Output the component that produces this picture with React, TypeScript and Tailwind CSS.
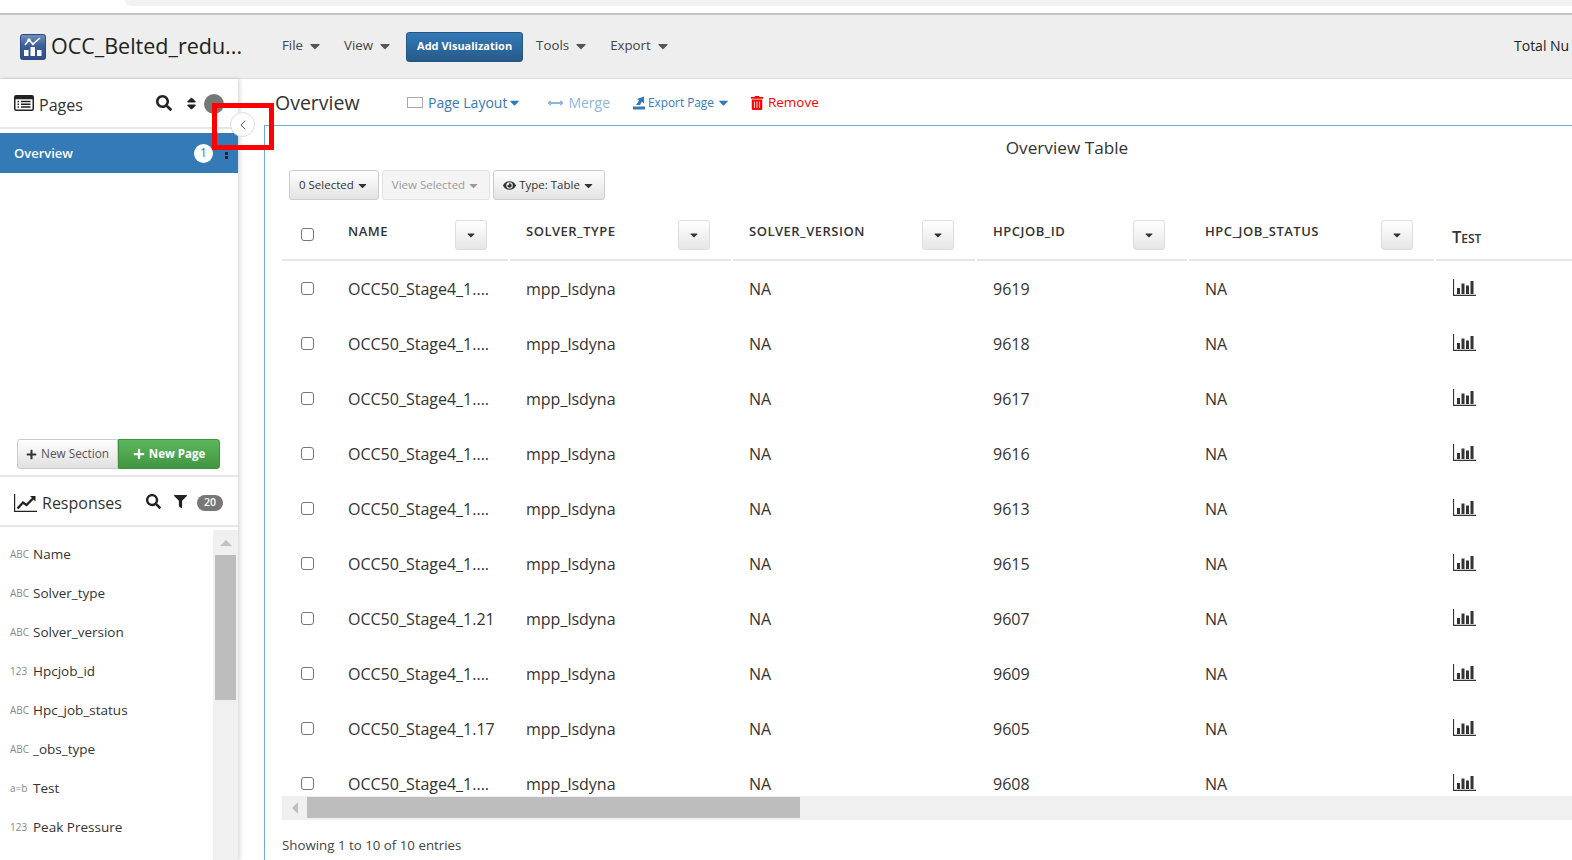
import { ChevronLeft } from "lucide-react";
import {
  FaCaretDown,
  FaEye,
  FaFilter,
  FaLongArrowAltRight,
  FaPlus,
  FaSearch,
  FaSort,
  FaTrashAlt,
} from "react-icons/fa";

const FONT = "font-['Open_Sans','Noto_Sans',sans-serif]";

const rows = [
  ["OCC50_Stage4_1....", "9619"],
  ["OCC50_Stage4_1....", "9618"],
  ["OCC50_Stage4_1....", "9617"],
  ["OCC50_Stage4_1....", "9616"],
  ["OCC50_Stage4_1....", "9613"],
  ["OCC50_Stage4_1....", "9615"],
  ["OCC50_Stage4_1.21", "9607"],
  ["OCC50_Stage4_1....", "9609"],
  ["OCC50_Stage4_1.17", "9605"],
  ["OCC50_Stage4_1....", "9608"],
];

const responses = [
  ["ABC", "Name"],
  ["ABC", "Solver_type"],
  ["ABC", "Solver_version"],
  ["123", "Hpcjob_id"],
  ["ABC", "Hpc_job_status"],
  ["ABC", "_obs_type"],
  ["a=b", "Test"],
  ["123", "Peak Pressure"],
];

function Logo() {
  return (
    <svg width="26" height="26" viewBox="0 0 26 26" className="shrink-0">
      <defs>
        <linearGradient id="logoBg" x1="0" y1="0" x2="0" y2="1">
          <stop offset="0" stopColor="#6f8fc0" />
          <stop offset="0.45" stopColor="#3c5f98" />
          <stop offset="1" stopColor="#2f4f85" />
        </linearGradient>
      </defs>
      <rect x="0.5" y="0.5" width="25" height="25" rx="2" fill="url(#logoBg)" stroke="#2c4a7c" />
      <path d="M5 11 L9 6 L13 10 L20 4" fill="none" stroke="#fff" strokeWidth="1.6" />
      <circle cx="9" cy="6" r="1.7" fill="#fff" />
      <circle cx="13" cy="10" r="1.3" fill="#fff" />
      <rect x="4" y="16" width="4.5" height="6" fill="#fff" />
      <rect x="10.5" y="13" width="4.5" height="9" fill="#fff" />
      <rect x="17" y="16" width="4.5" height="6" fill="#fff" />
    </svg>
  );
}

function ListIcon() {
  return (
    <svg width="20" height="16" viewBox="0 0 20 16" className="shrink-0">
      <rect x="0.75" y="0.75" width="18.5" height="14.5" rx="1.5" fill="#fff" stroke="#222" strokeWidth="1.5" />
      <rect x="0.75" y="0.75" width="18.5" height="3.5" fill="#222" />
      <path d="M3.5 6.5 H5 M7 6.5 H16.5 M3.5 9.25 H5 M7 9.25 H16.5 M3.5 12 H5 M7 12 H16.5" stroke="#222" strokeWidth="1.3" />
    </svg>
  );
}

function ResponsesIcon() {
  return (
    <svg width="23" height="18" viewBox="0 0 23 18" className="shrink-0">
      <path d="M0.6 0 V17.4 H23" fill="none" stroke="#222" strokeWidth="1.2" />
      <path d="M3.5 14.5 L9 8.5 L12.5 11 L20 3.5" fill="none" stroke="#222" strokeWidth="2.4" />
      <path d="M16 2 H21.5 V7.5 Z" fill="#222" />
    </svg>
  );
}

function BarsIcon() {
  return (
    <svg width="23" height="17" viewBox="0 0 23 17">
      <path d="M0.5 0 V16.4 H23" fill="none" stroke="#333" strokeWidth="1.2" />
      <rect x="4" y="9" width="3" height="6" fill="#333" />
      <rect x="8.5" y="4.5" width="3" height="10.5" fill="#333" />
      <rect x="13" y="6.5" width="3" height="8.5" fill="#333" />
      <rect x="17.5" y="2" width="3" height="13" fill="#333" />
    </svg>
  );
}

function ExportIcon() {
  return (
    <svg width="12" height="14" viewBox="0 0 12 14" className="shrink-0">
      <path d="M3 9 L6 4.5 L4 3 L11 0.5 L11 7.5 L8.8 5.8 L7 9 Z" fill="#337ab7" />
      <rect x="0" y="10.5" width="12" height="3" fill="#337ab7" />
    </svg>
  );
}

function Check() {
  return <span className="block w-[13px] h-[13px] rounded-[3px] border border-[#767676] bg-white" />;
}

function NavMenu({ label }: { label: string }) {
  return (
    <div className="flex items-center gap-[4px] text-[13.3px] text-[#444] -mt-[2px]">
      {label}
      <FaCaretDown className="text-[16px] text-[#555]" />
    </div>
  );
}

function ToolButton({ children, dim }: { children: React.ReactNode; dim?: boolean }) {
  return (
    <div
      className={`h-[30px] px-[9px] flex items-center gap-[2px] rounded-[3px] border text-[11.5px] ${
        dim
          ? "border-[#e2e2e2] bg-[#f4f4f4] text-[#9b9b9b]"
          : "border-[#ccc] bg-gradient-to-b from-white to-[#e3e3e3] text-[#333]"
      }`}
    >
      {children}
    </div>
  );
}

function HeadCell({ label, width, pad }: { label: string; width: string; pad: string }) {
  return (
    <div className={`${width} shrink-0 h-[53px] mr-[2px] border-b-2 border-[#e6e6e6] flex items-start justify-between ${pad}`}>
      <span className="mt-[14px] text-[13px] font-semibold tracking-[0.5px] text-[#333]">{label}</span>
      <span className="mt-[12px] w-[32px] h-[30px] rounded-[3px] border border-[#ddd] bg-gradient-to-b from-white to-[#e6e6e6] flex items-center justify-center">
        <FaCaretDown className="text-[12px] text-[#333]" />
      </span>
    </div>
  );
}

export default function App() {
  return (
    <div className={`${FONT} w-[1572px] h-[860px] overflow-hidden bg-white relative flex flex-col text-[#333]`}>
      {/* browser strip */}
      <div className="h-[15px] shrink-0 border-b-2 border-[#c4c4c4] pb-[7px] pl-[125px]">
        <div className="h-[6px] rounded-bl-[10px] bg-[#f1f2f4]" />
      </div>

      {/* app header */}
      <div className="h-[64px] shrink-0 bg-[#eee] border-b border-[#ddd] flex items-center pl-[20px] whitespace-nowrap">
        <Logo />
        <span className="ml-[5px] w-[231px] text-[21.5px] text-[#222]">OCC_Belted_redu...</span>
        <div className="w-[1232px] flex items-center">
          <NavMenu label="File" />
          <div className="ml-[21px]">
            <NavMenu label="View" />
          </div>
          <div className="ml-[13px] w-[117px] h-[30px] rounded-[3px] border border-[#245580] bg-gradient-to-b from-[#337ab7] to-[#265a88] text-white text-[11px] font-bold flex items-center justify-center">
            Add Visualization
          </div>
          <div className="ml-[13px]">
            <NavMenu label="Tools" />
          </div>
          <div className="ml-[21px]">
            <NavMenu label="Export" />
          </div>
        </div>
        <span className="text-[14px] text-[#222] -mt-[2px]">Total Nu</span>
      </div>

      <div className="flex-1 min-h-0 flex">
        {/* sidebar */}
        <div className="w-[238px] shrink-0 flex flex-col shadow-[2px_0_4px_rgba(0,0,0,0.15)] z-10 bg-white whitespace-nowrap">
          <div className="h-[50px] shrink-0 border-b-2 border-[#e6e6e6] flex items-center pl-[14px]">
            <ListIcon />
            <span className="ml-[5px] text-[16px] mt-[3px]">Pages</span>
            <FaSearch className="ml-[73px] text-[16px] text-[#222]" />
            <FaSort className="ml-[12px] text-[15px] text-[#222]" />
            <span className="ml-[5px] mt-[2px] w-[20px] h-[20px] rounded-full bg-[#777]" />
          </div>
          <div className="mt-[4px] h-[40px] shrink-0 bg-[#337ab7] flex items-center pl-[14px] text-white text-[13px] font-semibold">
            <span className="mt-[2px]">Overview</span>
            <span className="ml-[121px] w-[19px] h-[19px] rounded-full bg-white text-[#337ab7] text-[12px] font-normal flex items-center justify-center">
              1
            </span>
            <span className="ml-[12px] flex flex-col gap-[1.5px]">
              <span className="w-[3px] h-[3px] bg-[#222]" />
              <span className="w-[3px] h-[3px] bg-[#222]" />
              <span className="w-[3px] h-[3px] bg-[#222]" />
            </span>
          </div>
          <div className="flex-1 min-h-0 flex items-end pl-[17px] pb-[6px]">
            <div className="flex h-[30px] text-[11.8px]">
              <div className="w-[101px] rounded-l-[3px] border border-[#ccc] bg-gradient-to-b from-white to-[#e0e0e0] flex items-center justify-center gap-[4px] text-[#555]">
                <FaPlus className="text-[11px] text-[#333]" />
                New Section
              </div>
              <div className="w-[102px] rounded-r-[3px] border border-[#3e8f3e] bg-gradient-to-b from-[#5cb85c] to-[#419641] flex items-center justify-center gap-[4px] text-white font-bold text-[11.5px]">
                <FaPlus className="text-[12px]" />
                New Page
              </div>
            </div>
          </div>
          <div className="h-[52px] shrink-0 border-y-2 border-[#e6e6e6] flex items-center pl-[14px] pt-[3px]">
            <ResponsesIcon />
            <span className="ml-[5px] text-[16px]">Responses</span>
            <FaSearch className="ml-[24px] text-[15px] text-[#222] -mt-[3px]" />
            <FaFilter className="ml-[13px] text-[13px] text-[#222] -mt-[3px]" />
            <span className="ml-[10px] w-[26px] h-[16px] rounded-full bg-[#777] text-white text-[10.5px] font-semibold flex items-center justify-center">
              20
            </span>
          </div>
          <div className="mt-[3px] h-[330px] shrink-0 flex">
            <div className="flex-1 pt-[5px]">
              {responses.map(([kind, name]) => (
                <div key={name} className="h-[39px] pl-[10px] flex items-center">
                  <span className="w-[23px] text-[10px] text-[#888]">{kind}</span>
                  <span className="text-[13.5px] text-[#333]">{name}</span>
                </div>
              ))}
            </div>
            <div className="w-[25px] shrink-0 bg-[#f0f0f0] px-[2px] flex flex-col items-center">
              <div className="h-[25px] flex items-center">
                <div className="w-0 h-0 border-x-[6px] border-x-transparent border-b-[6px] border-b-[#c0c0c0]" />
              </div>
              <div className="w-full h-[145px] bg-[#bdbdbd]" />
            </div>
          </div>
        </div>

        {/* main */}
        <div className="flex-1 min-w-0 flex flex-col pl-[26px] whitespace-nowrap">
          <div className="h-[46px] shrink-0 flex items-center pl-[11px] pt-[1px]">
            <span className="w-[132px] text-[19.5px] text-[#333]">Overview</span>
            <span className="w-[16px] h-[11px] border-[1.5px] border-[#aaa] bg-white" />
            <span className="ml-[5px] text-[14px] text-[#337ab7]">Page Layout</span>
            <FaCaretDown className="text-[15px] text-[#337ab7]" />
            <span className="ml-[25px] flex items-center text-[#8db6da]">
              <span className="relative w-[17px] h-[10px] flex items-center">
                <FaLongArrowAltRight className="absolute right-0 text-[12px]" />
                <FaLongArrowAltRight className="absolute left-0 text-[12px] rotate-180" />
              </span>
              <span className="ml-[4px] text-[14px]">Merge</span>
            </span>
            <span className="ml-[23px] flex items-center">
              <ExportIcon />
              <span className="ml-[3px] text-[11.8px] text-[#337ab7]">Export Page</span>
              <FaCaretDown className="ml-[2px] text-[15px] text-[#337ab7]" />
            </span>
            <span className="ml-[19px] flex items-center text-[#ff0000]">
              <FaTrashAlt className="text-[14px]" />
              <span className="ml-[4px] text-[13.5px]">Remove</span>
            </span>
          </div>

          <div className="flex-1 min-h-0 border-l border-t border-[#6fa8dc] overflow-hidden">
            <div className="pl-[17px]">
              <div className="h-[44px] flex items-center justify-center pr-[12px] text-[17.2px] text-[#333] w-[1582px]">
                Overview Table
              </div>
              <div className="flex gap-[3px] pl-[7px] h-[30px]">
                <ToolButton>
                  0 Selected <FaCaretDown className="text-[13px]" />
                </ToolButton>
                <ToolButton dim>
                  View Selected <FaCaretDown className="text-[13px]" />
                </ToolButton>
                <ToolButton>
                  <FaEye className="text-[13px] mr-[1px]" /> Type: Table <FaCaretDown className="text-[13px]" />
                </ToolButton>
              </div>

              {/* table head */}
              <div className="mt-[8px] flex w-[1300px]">
                <div className="w-[66px] shrink-0 h-[53px] border-b-2 border-[#e6e6e6] pl-[19px] pt-[20px]">
                  <Check />
                </div>
                <HeadCell label="NAME" width="w-[160px]" pad="pr-[21px]" />
                <HeadCell label="SOLVER_TYPE" width="w-[221px]" pad="pl-[16px] pr-[21px]" />
                <HeadCell label="SOLVER_VERSION" width="w-[242px]" pad="pl-[16px] pr-[21px]" />
                <HeadCell label="HPCJOB_ID" width="w-[210px]" pad="pl-[16px] pr-[22px]" />
                <HeadCell label="HPC_JOB_STATUS" width="w-[245px]" pad="pl-[16px] pr-[21px]" />
                <div className="flex-1 h-[53px] border-b-2 border-[#e6e6e6] pl-[16px] pt-[17px] text-[16.5px] [font-variant:small-caps] font-semibold">
                  Test
                </div>
              </div>

              {/* table body */}
              <div className="h-[535px] overflow-hidden">
                {rows.map(([name, id], i) => (
                  <div key={i} className="h-[55px] flex items-center text-[16px] text-[#333]">
                    <div className="w-[66px] shrink-0 pl-[19px]">
                      <Check />
                    </div>
                    <div className="w-[178px] shrink-0">{name}</div>
                    <div className="w-[223px] shrink-0">mpp_lsdyna</div>
                    <div className="w-[244px] shrink-0">NA</div>
                    <div className="w-[213px] shrink-0">{id}</div>
                    <div className="w-[248px] shrink-0 -ml-[1px]">NA</div>
                    <div className="-mt-[3px]">
                      <BarsIcon />
                    </div>
                  </div>
                ))}
              </div>

              {/* horizontal scrollbar */}
              <div className="h-[24px] bg-[#f0f0f0] flex items-start pt-[1px] w-[1290px]">
                <div className="w-[25px] h-[21px] flex items-center justify-center">
                  <div className="w-0 h-0 border-y-[6px] border-y-transparent border-r-[6px] border-r-[#c0c0c0]" />
                </div>
                <div className="w-[493px] h-[21px] bg-[#bdbdbd]" />
              </div>
              <div className="mt-[16px] text-[13.3px] text-[#444]">Showing 1 to 10 of 10 entries</div>
            </div>
          </div>
        </div>
      </div>

      {/* collapse handle with the red annotation on top */}
      <div className="absolute left-[230px] top-[112px] w-[25px] h-[25px] rounded-full bg-white border border-[#ddd] z-20 flex items-center justify-center">
        <ChevronLeft size={16} strokeWidth={1.5} className="text-[#555]" />
      </div>
      <div className="absolute left-[212px] top-[103px] w-[62px] h-[47px] border-[5px] border-[#ff0000] z-30" />
    </div>
  );
}
